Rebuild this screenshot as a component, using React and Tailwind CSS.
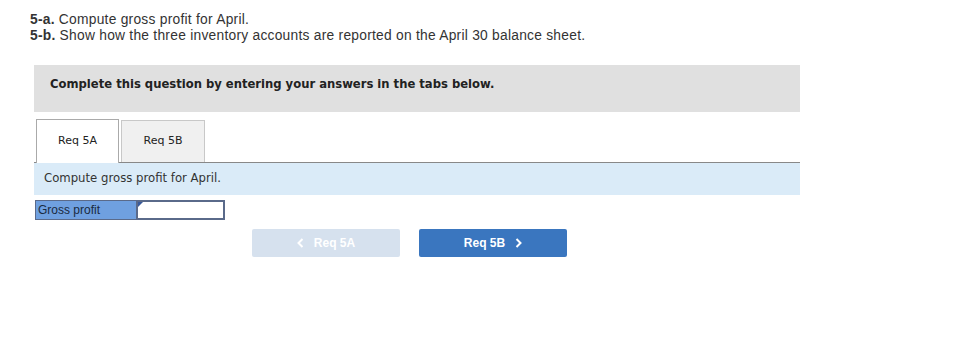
import React from "react";

function App() {
  return (
    <div className="w-[976px] h-[357px] bg-white relative" style={{ fontFamily: '"Liberation Sans", Arial, sans-serif' }}>
      <div className="pl-[30px] pt-[12px] text-[13.8px] leading-[16px] tracking-[0.25px] text-[#333]">
        <p><b>5-a.</b> Compute gross profit for April.</p>
        <p><b>5-b.</b> Show how the three inventory accounts are reported on the April 30 balance sheet.</p>
      </div>

      <div className="ml-[34px] mt-[21px] w-[766px]" style={{ fontFamily: '"DejaVu Sans", Verdana, sans-serif' }}>
        <div className="h-[47px] bg-[#e0e0e0] flex items-start pt-[11px] pl-[16px]">
          <b className="text-[11.6px] text-[#222]">Complete this question by entering your answers in the tabs below.</b>
        </div>

        <div className="mt-[7px] flex items-end border-b border-[#888] pl-[2px]">
          <div className="w-[83px] h-[44px] bg-white border border-[#aaa] border-b-0 -mb-px flex items-center justify-center text-[11px] text-[#222]">
            Req 5A
          </div>
          <div className="ml-[2px] w-[84px] h-[42px] bg-[#f0f0f0] border border-[#c8c8c8] border-b-0 flex items-center justify-center text-[11px] text-[#222]">
            Req 5B
          </div>
        </div>

        <div className="h-[32px] bg-[#daebf8] flex items-center pl-[10px] text-[11.7px] text-[#333]">
          Compute gross profit for April.
        </div>

        <div className="mt-[5px] ml-[1px] flex w-[190px] h-[20px] border border-[#5a6a8a]" style={{ fontFamily: '"Liberation Sans", Arial, sans-serif' }}>
          <div className="w-[100px] bg-[#6fa0e0] text-[12px] text-[#1a2a40] pl-[2px] leading-[18px]">Gross profit</div>
          <div className="relative flex-1 bg-white border-l-[2px] border-[#5a6a8a] border-y border-r border-y-[#5a6a8a]">
            <div className="absolute left-0 top-0 w-0 h-0 border-t-[5px] border-t-[#3a5a9a] border-r-[5px] border-r-transparent" />
          </div>
        </div>
      </div>

      <div className="mt-[9px] ml-[252px] flex gap-[19px]">
        <div className="w-[148px] h-[28px] bg-[#d6e1ee] rounded-[2px] flex items-center justify-center gap-[10px] text-white font-bold text-[12px]">
          <svg width="7" height="10" viewBox="0 0 7 10"><path d="M5.5 1 L1.5 5 L5.5 9" stroke="white" strokeWidth="2" fill="none" /></svg>
          <span>Req 5A</span>
        </div>
        <div className="w-[148px] h-[28px] bg-[#3a76bf] rounded-[2px] flex items-center justify-center gap-[10px] text-white font-bold text-[12px]">
          <span>Req 5B</span>
          <svg width="7" height="10" viewBox="0 0 7 10"><path d="M1.5 1 L5.5 5 L1.5 9" stroke="white" strokeWidth="2" fill="none" /></svg>
        </div>
      </div>
    </div>
  );
}

export default App;
